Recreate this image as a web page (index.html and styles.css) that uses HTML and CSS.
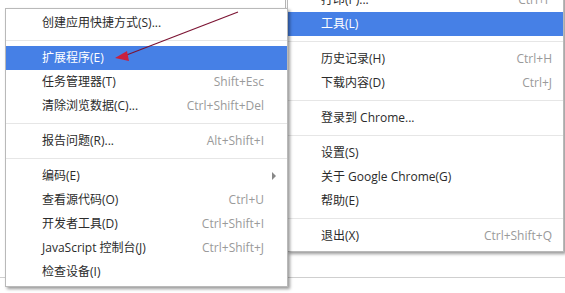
FILE: index.html
```html
<!DOCTYPE html>
<html lang="zh-CN">
<head>
<meta charset="utf-8">
<title>Chrome 菜单</title>
<link rel="stylesheet" href="styles.css">
</head>
<body>
<div class="backdrop">
  <div class="backdrop-tab"></div>
</div>

<div class="menu menu-main">
  <div class="item"><span class="label">打印(P)...</span><span class="key">Ctrl+P</span></div>
  <div class="item active"><span class="label">工具(L)</span></div>
  <div class="sep"></div>
  <div class="item"><span class="label">历史记录(H)</span><span class="key">Ctrl+H</span></div>
  <div class="item"><span class="label">下载内容(D)</span><span class="key">Ctrl+J</span></div>
  <div class="sep"></div>
  <div class="item"><span class="label">登录到 Chrome...</span></div>
  <div class="sep"></div>
  <div class="item"><span class="label">设置(S)</span></div>
  <div class="item"><span class="label">关于 Google Chrome(G)</span></div>
  <div class="item"><span class="label">帮助(E)</span></div>
  <div class="sep"></div>
  <div class="item"><span class="label">退出(X)</span><span class="key">Ctrl+Shift+Q</span></div>
</div>

<div class="menu menu-sub">
  <div class="item"><span class="label">创建应用快捷方式(S)...</span></div>
  <div class="sep"></div>
  <div class="item active"><span class="label">扩展程序(E)</span></div>
  <div class="item"><span class="label">任务管理器(T)</span><span class="key">Shift+Esc</span></div>
  <div class="item"><span class="label">清除浏览数据(C)...</span><span class="key">Ctrl+Shift+Del</span></div>
  <div class="sep"></div>
  <div class="item"><span class="label">报告问题(R)...</span><span class="key">Alt+Shift+I</span></div>
  <div class="sep"></div>
  <div class="item"><span class="label">编码(E)</span><span class="submenu-arrow"></span></div>
  <div class="item"><span class="label">查看源代码(O)</span><span class="key">Ctrl+U</span></div>
  <div class="item"><span class="label">开发者工具(D)</span><span class="key">Ctrl+Shift+I</span></div>
  <div class="item"><span class="label">JavaScript 控制台(J)</span><span class="key">Ctrl+Shift+J</span></div>
  <div class="item"><span class="label">检查设备(I)</span></div>
</div>

<svg class="pointer" width="565" height="293" viewBox="0 0 565 293">
  <line x1="238" y1="12" x2="124" y2="56" stroke="#7c1433" stroke-width="1.2"/>
  <polygon points="115,58 127,51 129,61" fill="#c9203f"/>
</svg>
</body>
</html>
```

FILE: styles.css
```css
html, body {
  margin: 0;
  padding: 0;
  background: #ffffff;
}

body {
  width: 565px;
  height: 293px;
  overflow: hidden;
  position: relative;
  font-family: "Open Sans", "Noto Sans CJK SC", sans-serif;
  font-size: 12px;
  color: #2b2b2b;
}

.backdrop {
  height: 277px;
  border-bottom: 1px solid #cfcfcf;
}

.backdrop-tab {
  width: 285px;
  height: 8px;
  border-right: 1px solid #b5b5b5;
}

.menu {
  position: absolute;
  background: #ffffff;
  border: 1px solid #b9b9b9;
  box-shadow: 2px 2px 3px rgba(0, 0, 0, 0.4);
  display: flex;
  flex-direction: column;
  box-sizing: border-box;
}

.menu-main {
  left: 287px;
  top: -14px;
  width: 277px;
  padding: 1px 0 3px;
}

.menu-sub {
  left: 5px;
  top: 8px;
  width: 283px;
  padding: 2px 0 2px;
}

.item {
  height: 24px;
  display: flex;
  align-items: center;
  justify-content: space-between;
  line-height: 24px;
  white-space: nowrap;
}

.menu-sub .item {
  padding: 0 23px 0 36px;
}

.menu-main .item {
  padding: 0 11px 0 33px;
}

.item.active {
  background: #4680e6;
  color: #ffffff;
}

.key {
  color: #9a9a9a;
}

.sep {
  height: 11px;
  display: flex;
  align-items: center;
}

.sep::before {
  content: "";
  flex: 1;
  height: 1px;
  background: #e6e6e6;
}

.submenu-arrow {
  width: 0;
  height: 0;
  border-top: 4px solid transparent;
  border-bottom: 4px solid transparent;
  border-left: 4px solid #888888;
  margin-right: -12px;
}

.pointer {
  position: absolute;
  left: 0;
  top: 0;
  pointer-events: none;
}
```
